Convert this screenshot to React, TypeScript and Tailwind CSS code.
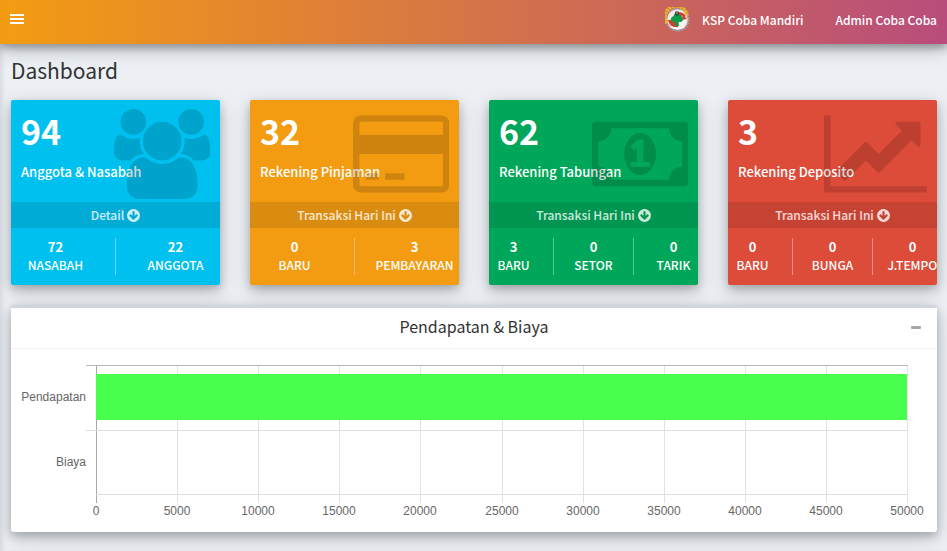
import React from "react";

const DOWN =
  "M1412 897q0-27-18-45l-91-91q-18-18-45-18t-45 18l-189 189v-502q0-26-19-45t-45-19h-128q-26 0-45 19t-19 45v502l-189-189q-19-19-45-19t-45 19l-91 91q-18 18-18 45t18 45l362 362 91 91q18 18 45 18t45-18l91-91 362-362q18-18 18-45zm252-1q0 209-103 385.5t-279.5 279.5-385.5 103-385.5-103-279.5-279.5-103-385.5 103-385.5 279.5-279.5 385.5-103 385.5 103 279.5 279.5 103 385.5z";

const USERS =
  "M657 896q-162 5-265 128h-134q-82 0-138-40.5t-56-118.5q0-353 124-353 6 0 43.5 21t97.5 42.5 119 21.5q67 0 133-23-5 37-5 66 0 139 81 256zm1071 637q0 120-73 189.500t-194 69.500h-874q-121 0-194-69.500t-73-189.500q0-53 3.500-103.500t14-109 26.500-108.500 43-97.500 62-81 85.500-53.500 111.500-20q10 0 43 21.500t73 48 107 48 135 21.500 135-21.500 107-48 73-48 43-21.500q61 0 111.500 20t85.500 53.500 62 81 43 97.500 26.500 108.500 14 109 3.500 103.500zm-1024-1277q0 106-75 181t-181 75-181-75-75-181 75-181 181-75 181 75 75 181zm704 384q0 159-112.500 271.500t-271.500 112.500-271.500-112.500-112.500-271.500 112.500-271.500 271.500-112.500 271.500 112.500 112.500 271.500zm576 225q0 78-56 118.500t-138 40.500h-134q-103-123-265-128 81-117 81-256 0-29-5-66 66 23 133 23 59 0 119-21.500t97.500-42.500 43.500-21q124 0 124 353zm-128-609q0 106-75 181t-181 75-181-75-75-181 75-181 181-75 181 75 75 181z";

const CARD =
  "M1760 128q66 0 113 47t47 113v1216q0 66-47 113t-113 47h-1600q-66 0-113-47t-47-113v-1216q0-66 47-113t113-47h1600zm-1600 128q-13 0-22.5 9.5t-9.5 22.5v224h1664v-224q0-13-9.5-22.5t-22.5-9.5h-1600zm1600 1280q13 0 22.5-9.5t9.5-22.5v-608h-1664v608q0 13 9.5 22.5t22.5 9.5h1600zm-1504-128v-128h256v128h-256zm384 0v-128h384v128h-384z";

const MONEY =
  "M768 1152h384v-96h-128v-448h-114l-148 137 77 80q42-37 55-57h2v288h-128v96zm512-256q0 70-21 142t-59.5 134-101.5 101-138 39-138-39-101.5-101-59.5-134-21-142 21-142 59.5-134 101.5-101 138-39 138 39 101.5 101 59.5 134 21 142zm512 256v-512q-106 0-181-75t-75-181h-1152q0 106-75 181t-181 75v512q106 0 181 75t75 181h1152q0-106 75-181t181-75zm128-832v1152q0 26-19 45t-45 19h-1792q-26 0-45-19t-19-45v-1152q0-26 19-45t45-19h1792q26 0 45 19t19 45z";

const LINE =
  "M2048 1536v128h-2048v-1536h128v1408h1920zm-128-1248v435q0 21-19.5 29.5t-35.5-7.5l-121-121-633 633q-10 10-23 10t-23-10l-233-233-416 416-192-192 585-585q10-10 23-10t23 10l233 233 464-464-121-121q-16-16-7.5-35.5t29.5-19.5h435q14 0 23 9t9 23z";

type Stat = { value: number; label: string };
type Summary = {
  total: number;
  title: string;
  link: string;
  color: string;
  icon: string;
  viewBox: string;
  stats: Stat[];
};

const summaries: Summary[] = [
  {
    total: 94,
    title: "Anggota & Nasabah",
    link: "Detail",
    color: "bg-[#00c0ef]",
    icon: USERS,
    viewBox: "64 0 1920 1792",
    stats: [
      { value: 72, label: "NASABAH" },
      { value: 22, label: "ANGGOTA" },
    ],
  },
  {
    total: 32,
    title: "Rekening Pinjaman",
    link: "Transaksi Hari Ini",
    color: "bg-[#f39c12]",
    icon: CARD,
    viewBox: "0 0 1920 1792",
    stats: [
      { value: 0, label: "BARU" },
      { value: 3, label: "PEMBAYARAN" },
    ],
  },
  {
    total: 62,
    title: "Rekening Tabungan",
    link: "Transaksi Hari Ini",
    color: "bg-[#00a65a]",
    icon: MONEY,
    viewBox: "0 0 1920 1792",
    stats: [
      { value: 3, label: "BARU" },
      { value: 0, label: "SETOR" },
      { value: 0, label: "TARIK" },
    ],
  },
  {
    total: 3,
    title: "Rekening Deposito",
    link: "Transaksi Hari Ini",
    color: "bg-[#dd4b39]",
    icon: LINE,
    viewBox: "0 0 2048 1792",
    stats: [
      { value: 0, label: "BARU" },
      { value: 0, label: "BUNGA" },
      { value: 0, label: "J.TEMPO" },
    ],
  },
];

function Logo() {
  return (
    <svg viewBox="0 0 25 25" className="size-[25px]" aria-hidden="true">
      <circle cx="12.5" cy="12.5" r="10.5" fill="#f3e9e2" />
      <circle cx="12.5" cy="12.5" r="11" fill="none" stroke="#a8a3a8" strokeWidth="2" strokeDasharray="2 1" />
      <path d="M2 16A11 11 0 1 1 22 8" fill="none" stroke="#e9b91f" strokeWidth="3.4" strokeDasharray="2.4 .7" />
      <path d="M13 5q8 0 9 8h-9z" fill="#dc3a2c" />
      <path d="M3 13h10v7H8q-4-2-5-7z" fill="#dc3a2c" />
      <path d="M17 8l4 1 1 5-4 5-4-1z" fill="#fbf6f2" />
      <path d="M17 8l3 0 1 4-3 1z" fill="#dc3a2c" />
      <path d="M12.5 6q3 .5 3.500 3 3 1.500 1.500 5-2 2-4 .5l.5 4.500h-4l.5-4.500q-3 2-4.500-.5-1-3.500 2.500-5 .5-2.500 4-3z" fill="#129a4c" />
      <circle cx="12" cy="6.500" r="2.200" fill="#37414a" />
      <circle cx="12" cy="6" r=".8" fill="#c7cdd0" />
      <path d="M6 19.500q6.500 5 13 0" fill="none" stroke="#fff" strokeWidth="2" />
      <path d="M7 22q5.500 3 11 0" fill="none" stroke="#8f96a0" strokeWidth="1" />
    </svg>
  );
}

function SummaryCard({ item }: { item: Summary }) {
  return (
    <section
      className={`relative rounded-[2px] text-white shadow-[0_4px_8px_rgba(0,0,0,0.2),0_6px_20px_rgba(0,0,0,0.19)] ${item.color}`}
    >
      <div className="h-[102px] px-[10px] pt-[10px]">
        <h3 className="text-[34px] leading-[42px] font-bold">{item.total}</h3>
        <p className="mt-[10px] text-[13px] leading-5 font-medium">{item.title}</p>
      </div>
      <svg
        viewBox={item.viewBox}
        className="absolute top-[9px] right-[10px] h-[90px] w-auto fill-black/15"
        aria-hidden="true"
      >
        <path d={item.icon} />
      </svg>
      <a
        href="#"
        className="flex h-[26px] items-center justify-center gap-[3px] bg-black/10 text-[12px] leading-[26px] font-medium text-white/80"
      >
        {item.link}
        <svg viewBox="128 0 1536 1792" className="h-[15px] w-[13px] fill-current" aria-hidden="true">
          <path d={DOWN} />
        </svg>
      </a>
      <dl className="-mx-[15px] flex py-[10px]">
        {item.stats.map((s, i) => (
          <div
            key={s.label}
            className={`flex h-[37px] min-w-0 flex-1 flex-col-reverse items-center justify-end leading-[18px] ${
              i < item.stats.length - 1 ? "border-r border-[#f4f4f4]/40" : ""
            }`}
          >
            <dt className="text-[12px] font-medium whitespace-nowrap">{s.label}</dt>
            <dd className="text-[13px] font-bold">{s.value}</dd>
          </div>
        ))}
      </dl>
    </section>
  );
}

const ticks = [0, 5000, 10000, 15000, 20000, 25000, 30000, 35000, 40000, 45000, 50000];
const rows = [
  { name: "Pendapatan", value: 50000, y: 38 },
  { name: "Biaya", value: 0, y: 103 },
];
const X0 = 75;
const SPAN = 811;
const xOf = (v: number) => X0 + Math.round((v / 50000) * SPAN);

function Chart() {
  return (
    <svg
      viewBox="0 0 906 163"
      className="block h-auto w-full font-['Liberation_Sans',Arial,sans-serif] text-[12px]"
      role="img"
      aria-label="Pendapatan & Biaya"
    >
      <g shapeRendering="crispEdges">
        {ticks.map((t) => (
          <rect key={t} x={xOf(t)} y="6" width="1" height="138" fill={t === 0 ? "#a9a9ab" : "#e2e2e2"} />
        ))}
        <rect x="65" y="71" width="822" height="1" fill="#dedede" />
        <rect x="75" y="135" width="812" height="1" fill="#dedede" />
        <rect x="65" y="6" width="822" height="1" fill="#b8b8b8" />
        {rows.map((r) => (
          <rect key={r.name} x={X0} y={r.y - 23} width={(r.value / 50000) * SPAN} height="46" fill="#48ff4e" />
        ))}
      </g>
      <g fill="#666">
        {rows.map((r) => (
          <text key={r.name} x="65" y={r.y + 4} textAnchor="end">
            {r.name}
          </text>
        ))}
        {ticks.map((t) => (
          <text key={t} x={xOf(t)} y="156" textAnchor="middle">
            {t}
          </text>
        ))}
      </g>
    </svg>
  );
}

export default function App() {
  return (
    <div className="min-h-screen bg-[#ecf0f5] font-['Noto_Sans_CJK_SC','Source_Sans_Pro',sans-serif] text-[#333] shadow-[inset_4px_0_5px_-2px_rgba(0,0,0,0.1)]">
      <header className="relative flex h-11 items-center justify-between bg-[linear-gradient(to_right,#f39c12,#b84d7c)] pr-[10px] text-[12px] font-medium text-white shadow-[0_4px_8px_rgba(0,0,0,0.3),0_6px_20px_rgba(0,0,0,0.19)]">
        <button type="button" aria-label="Menu" className="ml-[10px] flex h-5 w-[14px] flex-col justify-center gap-[2px] pb-[6px]">
          <span className="h-[2px] w-full bg-white" />
          <span className="h-[2px] w-full bg-white" />
          <span className="h-[2px] w-full bg-white" />
        </button>
        <nav className="flex items-center gap-8 pb-[5px]">
          <a href="#" className="flex items-center gap-3">
            <Logo />
            KSP Coba Mandiri
          </a>
          <a href="#">Admin Coba Coba</a>
        </nav>
      </header>
      <main className="pr-[10px] pb-[18px] pl-[11px]">
        <h1 className="pt-3 text-[21px] leading-7">Dashboard</h1>
        <div className="mt-4 grid grid-cols-4 gap-[30px]">
          {summaries.map((s) => (
            <SummaryCard key={s.title} item={s} />
          ))}
        </div>
        <section className="mt-5 rounded-[3px] border-t-3 border-[#d2d6de] bg-white shadow-[0_4px_8px_rgba(0,0,0,0.2),0_6px_20px_rgba(0,0,0,0.19)]">
          <div className="relative border-b border-[#f4f4f4] pt-2 pb-3 text-center">
            <h2 className="text-[16px] leading-5">Pendapatan &amp; Biaya</h2>
            <button type="button" aria-label="Collapse" className="absolute top-[9px] right-[10px] flex h-5 w-[22px] items-center justify-center">
              <span className="h-[3px] w-[10px] rounded-[1px] bg-[#a3a8ae]" />
            </button>
          </div>
          <div className="p-[10px]">
            <Chart />
          </div>
        </section>
      </main>
    </div>
  );
}
